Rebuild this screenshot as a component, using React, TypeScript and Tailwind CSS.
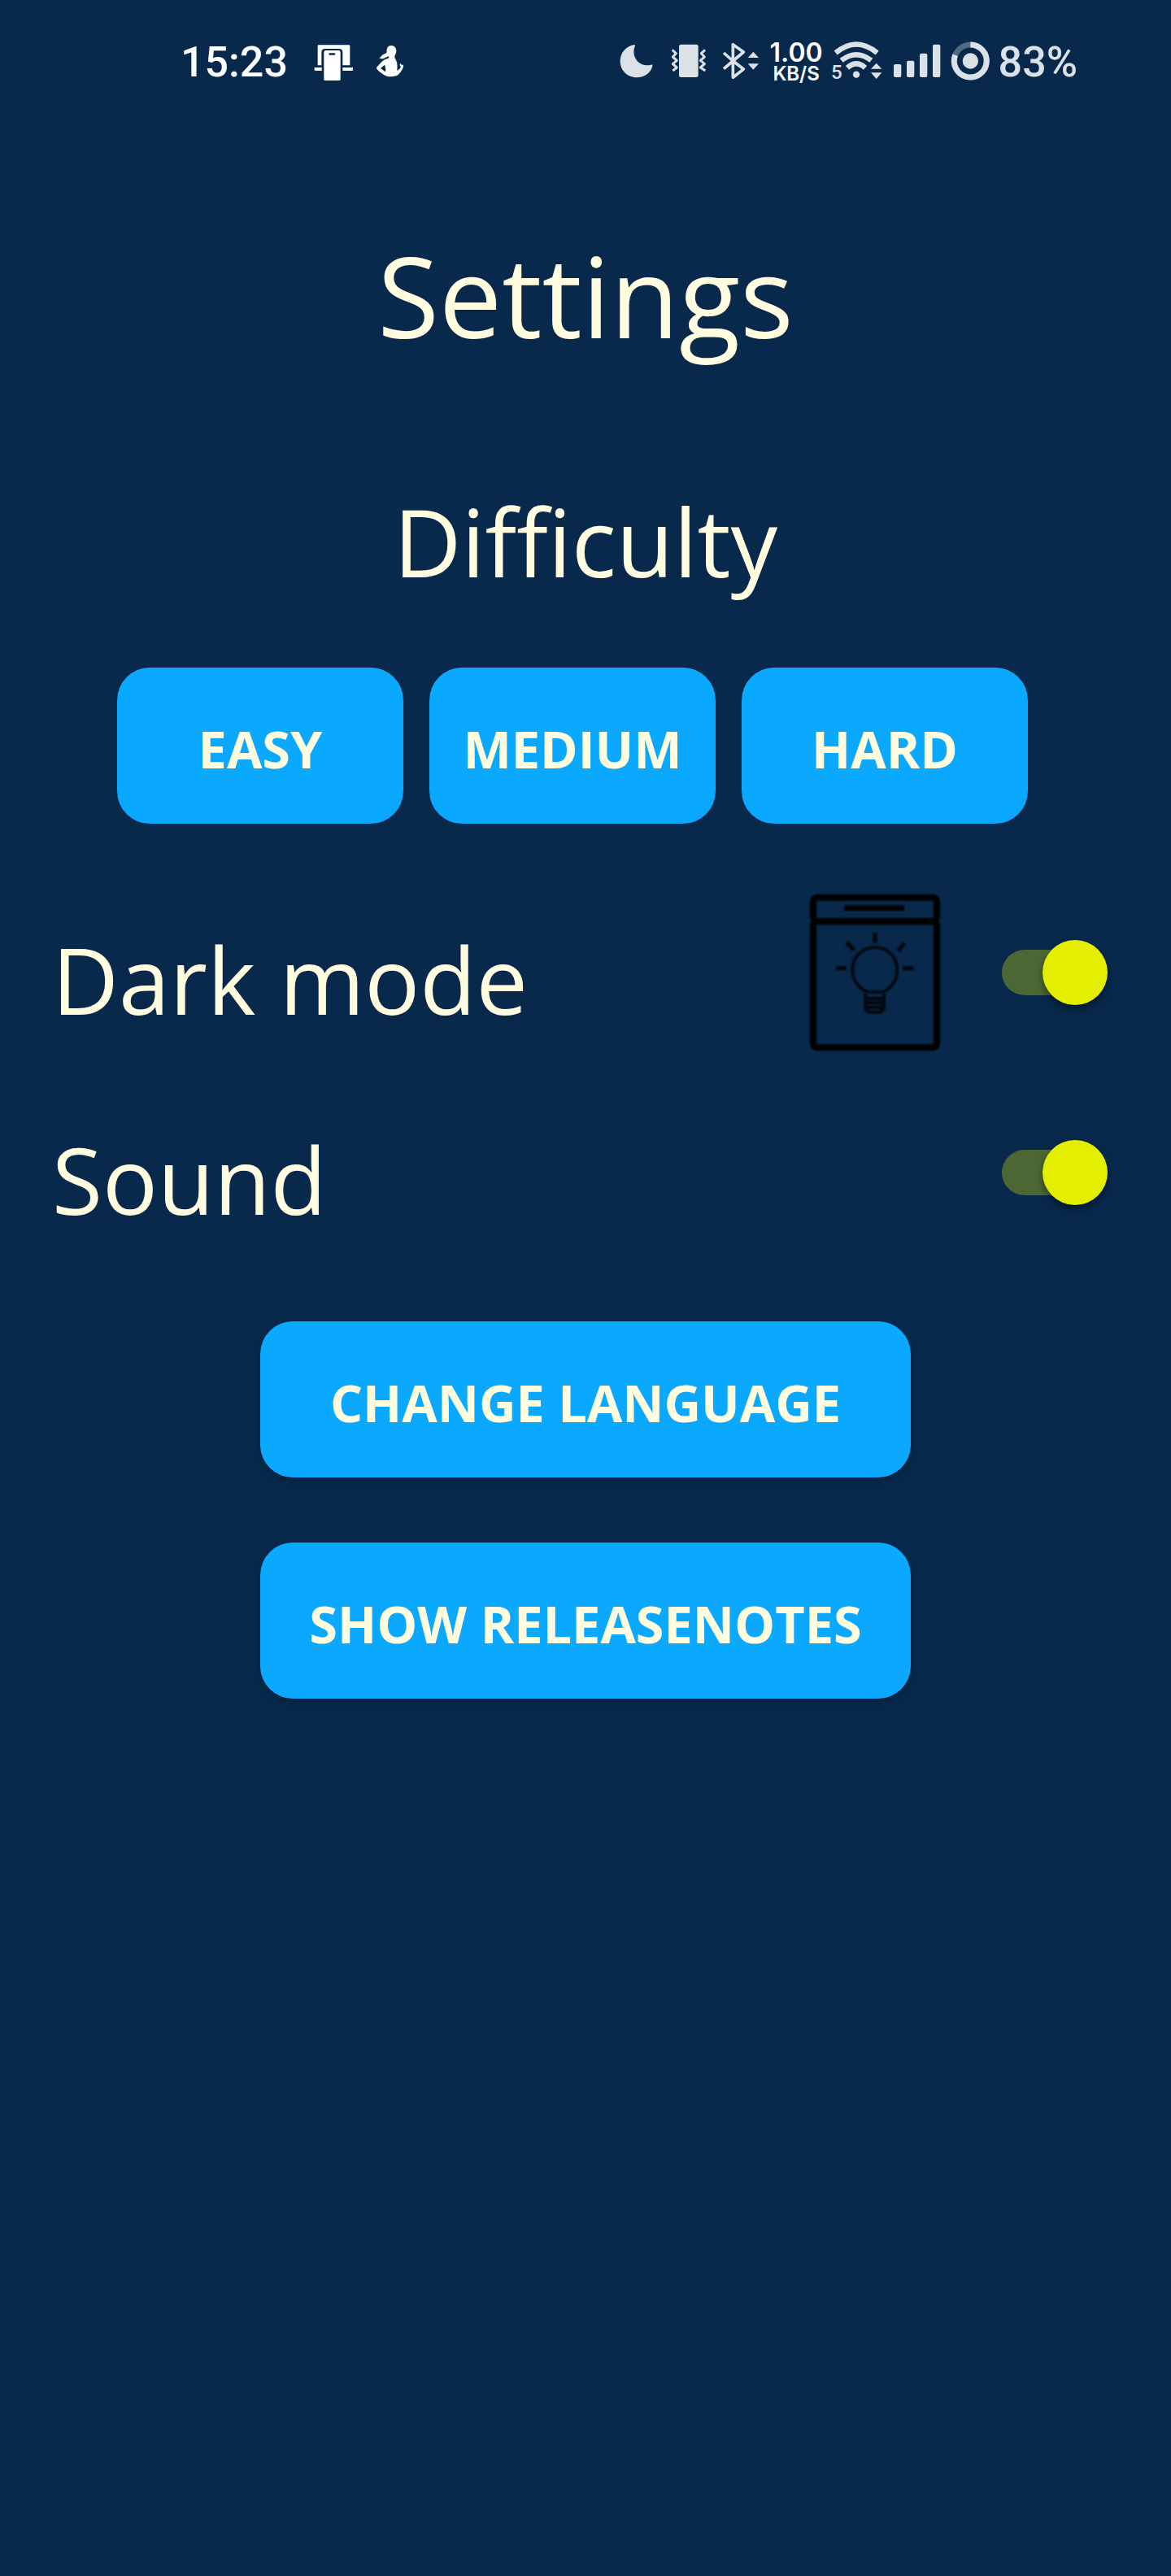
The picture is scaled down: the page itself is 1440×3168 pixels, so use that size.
import { useState } from "react";
import type { ReactNode } from "react";

function StatusIcon({ box, className, children }: { box: string; className: string; children: ReactNode }) {
  return (
    <svg viewBox={box} className={`h-12 shrink-0 overflow-visible ${className}`} fill="currentColor" aria-hidden="true">
      {children}
    </svg>
  );
}

function StatusBar() {
  return (
    <header className="flex h-[150px] items-center justify-between pr-[115px] pl-[222px] text-[#dae1e7]">
      <div className="flex items-center text-white">
        <time className="mr-8 pt-1 font-['Roboto'] text-[52px] leading-[52px] font-medium">15:23</time>
        <StatusIcon box="558 63 144 144" className="mr-7 w-12">
          <path d="M576 76H687Q691 76 691 80V151H664V103Q664 90 651 90H599Q586 90 586 103V151H572V80Q572 76 576 76Z" />
          <path d="M560 159H587V171H564Q560 171 560 167ZM664 159H702V167Q702 171 698 171H664Z" />
          <path
            fillRule="evenodd"
            d="M602 96H649Q656 96 656 103V203Q656 207 652 207H599Q595 207 595 203V103Q595 96 602 96ZM616 106Q613 106 613 109.500T616 113H634Q637 113 637 109.500T634 106Z"
          />
        </StatusIcon>
        <StatusIcon box="786 63 108 144" className="w-9">
          <path
            fillRule="evenodd"
            d="M843 78C856 78 863 88 862 101C861 108 857 112 856 118C855 123 858 126 861 132C867 143 866 158 865 171C873 166 877 161 879 157C875 152 873 146 877 145C880 145 880 149 883 151C884 147 888 147 888 153C888 163 880 174 868 187C862 193 834 195 821 189C808 180 797 173 790 164C787 159 793 154 800 147C808 138 816 130 828 127C835 125 836 121 833 118C828 119 825 122 817 125C810 128 802 127 799 124C805 121 808 115 814 111C820 107 826 108 827 102C825 88 832 78 843 78ZM804 162L821 175C825 168 822 157 819 149Z"
          />
        </StatusIcon>
      </div>
      <div className="flex items-center gap-2.5">
        <StatusIcon box="66 63 159 144" className="w-[53px]">
          <path d="M121 75C125 75 123 79 121 84C115 101 119 123 133 137C146 149 163 153 181 149C185 148 188 149 187 153C182 178 158 196 129 196C95 196 68 170 68 136C68 104 90 79 121 75Z" />
        </StatusIcon>
        <StatusIcon box="255 63 159 144" className="w-[53px]">
          <rect x="285" y="74" width="71" height="121" rx="8" />
          <path
            d="M260 94L274 107L262 120L277 133L262 146L277 159L262 171M381 94L367 107L379 120L364 133L379 146L364 159L382 171"
            fill="none"
            stroke="currentColor"
            strokeWidth="9"
            strokeLinejoin="round"
          />
        </StatusIcon>
        <StatusIcon box="444 63 147 144" className="w-[49px]">
          <path
            d="M450 105L484 135L450 164M484 135L523 102L484 74V196L523 165L484 135"
            fill="none"
            stroke="currentColor"
            strokeWidth="11"
            strokeLinejoin="round"
          />
          <path d="M559 101L579 123H539ZM559 167L579 145H539Z" />
        </StatusIcon>
        <div className="flex w-[65px] flex-col items-center pt-1 font-['Inter'] font-semibold text-white">
          <span className="text-[32px] leading-7">1.00</span>
          <span className="text-[24px] leading-6">KB/S</span>
        </div>
        <StatusIcon box="36 63 195 144" className="w-[65px]">
          <path
            d="M53 105Q129 42 206 105M74 133Q129 90 184 133M96 160Q129 130 162 160"
            fill="none"
            stroke="currentColor"
            strokeWidth="19"
          />
          <circle cx="129" cy="185" r="12.500" />
          <path d="M203 143L223 164H183ZM203 201L223 178H183Z" />
          <text x="36" y="200" className="font-['Roboto'] text-[72px] font-medium">
            5
          </text>
        </StatusIcon>
        <StatusIcon box="261 63 186 144" className="w-[62px]">
          <rect x="267" y="147" width="28" height="48" rx="6" />
          <rect x="315" y="134" width="28" height="61" rx="6" />
          <rect x="363" y="107" width="28" height="88" rx="6" />
          <rect x="411" y="74" width="28" height="121" rx="6" />
        </StatusIcon>
        <StatusIcon box="480 61 147 144" className="w-[49px]">
          <circle cx="553" cy="133" r="60" fill="none" stroke="currentColor" strokeWidth="21" opacity="0.35" />
          <path d="M553 73A60 60 0 1 1 497 111" fill="none" stroke="currentColor" strokeWidth="21" />
          <circle cx="553" cy="133" r="29" />
        </StatusIcon>
        <span className="pt-1 font-['Roboto'] text-[52px] leading-[52px] font-medium">83%</span>
      </div>
    </header>
  );
}

function DarkModeIcon() {
  return (
    <svg
      viewBox="108 90 480 576"
      className="h-48 w-40 shrink-0 text-black blur-[1px]"
      fill="none"
      stroke="currentColor"
      aria-hidden="true"
    >
      <rect x="120" y="101" width="456" height="88" rx="16" strokeWidth="24" />
      <rect x="120" y="190" width="456" height="465" rx="16" strokeWidth="24" />
      <path d="M234 140H456" strokeWidth="20" />
      <g opacity="0.85">
        <path d="M348 232V270M243 267L271 295M457 269L434 299M204 362H242M450 362H490" strokeWidth="15" />
        <path d="M322 450C285 438 265 402 265 368C265 320 302 285 348 285S430 320 430 368C430 402 412 438 374 450Z" strokeWidth="11" />
        <path d="M312 456V506Q316 524 330 524H362Q376 524 381 506V456M312 474H380M312 490H380M314 507H378" strokeWidth="12" />
      </g>
    </svg>
  );
}

function Switch({ id, checked, onChange }: { id: string; checked: boolean; onChange: (v: boolean) => void }) {
  return (
    <input
      id={id}
      type="checkbox"
      role="switch"
      checked={checked}
      onChange={(e) => onChange(e.target.checked)}
      className="relative h-20 w-[130px] shrink-0 cursor-pointer appearance-none before:absolute before:inset-y-3 before:left-0 before:w-[118px] before:rounded-full before:bg-[#4d6734] after:absolute after:top-0 after:left-0 after:size-20 after:rounded-full after:bg-[#e4ee00] after:shadow-[0_5px_10px_rgba(0,0,0,0.4)] checked:after:left-[50px]"
    />
  );
}

const buttonClass =
  "h-48 cursor-pointer rounded-[40px] bg-[#0aa8ff] pt-2 text-[63px] leading-[80px] font-bold text-[#fffce0] uppercase";

export default function App() {
  const [dark, setDark] = useState(true);
  const [sound, setSound] = useState(true);

  return (
    <div className="min-h-screen bg-[#08294b] font-['Open_Sans',sans-serif] text-[#fffce0]">
      <StatusBar />
      <main className="pt-[116px]">
        <h1 className="text-center text-[138px] leading-[192px]">Settings</h1>
        <h2 className="mt-32 text-center text-[115px] leading-[160px]">Difficulty</h2>
        <div className="mt-[75px] grid grid-cols-3 gap-8 pr-44 pl-36">
          <button type="button" className={buttonClass}>Easy</button>
          <button type="button" className={buttonClass}>Medium</button>
          <button type="button" className={buttonClass}>Hard</button>
        </div>
        <div className="mt-[87px] flex flex-col gap-[54px] pr-[78px] pl-16">
          <div className="flex h-48 items-center">
            <label htmlFor="dark-mode" className="grow pt-4 text-[113px] leading-[160px]">Dark mode</label>
            <DarkModeIcon />
            <div className="ml-[76px] flex">
              <Switch id="dark-mode" checked={dark} onChange={setDark} />
            </div>
          </div>
          <div className="flex h-48 items-center">
            <label htmlFor="sound" className="grow pt-4 text-[113px] leading-[160px]">Sound</label>
            <Switch id="sound" checked={sound} onChange={setSound} />
          </div>
        </div>
        <div className="mt-[87px] flex flex-col gap-20 px-80">
          <button type="button" className={`${buttonClass} shadow-[0_4px_10px_rgba(0,0,0,0.2)]`}>Change language</button>
          <button type="button" className={`${buttonClass} shadow-[0_4px_10px_rgba(0,0,0,0.2)]`}>Show releasenotes</button>
        </div>
      </main>
    </div>
  );
}
